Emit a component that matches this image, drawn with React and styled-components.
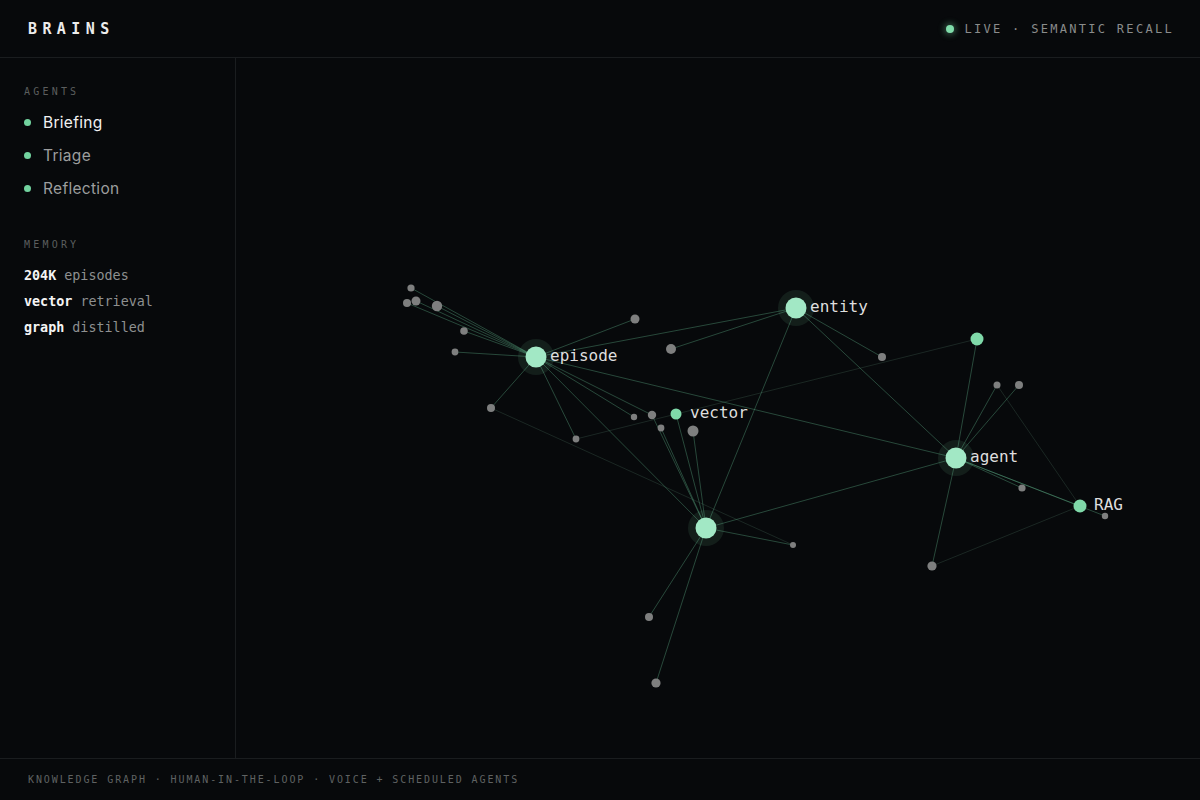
import React from "react";
import styled, { createGlobalStyle } from "styled-components";

const Global = createGlobalStyle`
  html, body { margin: 0; padding: 0; background: #07090b; }
  body { font-family: "Inter", "DejaVu Sans", sans-serif; color: #e6e6e6; }
  * { box-sizing: border-box; }
`;

const MONO = `"DejaVu Sans Mono", "Liberation Mono", monospace`;
const BORDER = "#1a1d1f";

const Page = styled.div`
  width: 1200px;
  height: 800px;
  display: flex;
  flex-direction: column;
  background: #07090b;
  overflow: hidden;
`;

const Header = styled.header`
  height: 58px;
  flex: none;
  border-bottom: 1px solid ${BORDER};
  display: flex;
  align-items: center;
  justify-content: space-between;
  padding: 0 28px;
`;

const Brand = styled.div`
  font-family: ${MONO};
  font-size: 15px;
  font-weight: 600;
  letter-spacing: 5.4px;
  color: #ececec;
`;

const Status = styled.div`
  display: flex;
  align-items: center;
  gap: 10px;
  font-family: ${MONO};
  font-size: 12px;
  letter-spacing: 2.3px;
  color: #8a8c8c;
  margin-right: -2px;
`;

const LiveDot = styled.span`
  width: 8px;
  height: 8px;
  border-radius: 50%;
  background: #7fdcaa;
  box-shadow: 0 0 6px 2px rgba(127, 220, 170, 0.35);
`;

const Body = styled.div`
  flex: 1;
  display: flex;
  min-height: 0;
`;

const Sidebar = styled.aside`
  width: 236px;
  flex: none;
  border-right: 1px solid ${BORDER};
  padding: 28px 24px 0;
`;

const SectionTitle = styled.div`
  font-family: ${MONO};
  font-size: 10px;
  line-height: 12px;
  letter-spacing: 3.2px;
  color: #5b5e5e;
  margin-top: ${(p) => p.$top || 0}px;
  margin-bottom: ${(p) => p.$bottom || 0}px;
`;

const AgentList = styled.ul`
  list-style: none;
  margin: 0;
  padding: 0;
`;

const Agent = styled.li`
  height: 33px;
  display: flex;
  align-items: center;
  gap: 12px;
  font-size: 15.5px;
  letter-spacing: 0.3px;
  color: ${(p) => (p.$active ? "#f2f2f2" : "#9c9e9e")};
`;

const AgentDot = styled.span`
  width: 7px;
  height: 7px;
  border-radius: 50%;
  background: #72d39f;
`;

const MemoryLine = styled.div`
  font-family: ${MONO};
  font-size: 13.4px;
  line-height: 26px;
  color: #8e9090;
`;

const MemoryKey = styled.b`
  color: #f4f4f4;
  font-weight: 700;
  margin-right: 8px;
`;

const Main = styled.main`
  flex: 1;
  min-width: 0;
  position: relative;
`;

const GraphSvg = styled.svg`
  display: block;
  width: 100%;
  height: 100%;
`;

const Label = styled.text`
  font-family: ${MONO};
  font-size: 16px;
  font-weight: 500;
  fill: #dedede;
`;

const Footer = styled.footer`
  height: 42px;
  flex: none;
  border-top: 1px solid ${BORDER};
  display: flex;
  align-items: center;
  padding: 0 28px;
  font-family: ${MONO};
  font-size: 10px;
  letter-spacing: 1.9px;
  color: #5f6262;
`;

const N = {
  episode: [536, 357, "hub"],
  entity: [796, 308, "hub"],
  H: [706, 528, "hub"],
  agent: [956, 458, "hub"],
  vector: [676, 414, "mid", 5.5],
  RAG: [1080, 506, "mid", 6.5],
  G1: [977, 339, "mid", 6.5],
  a1: [411, 288, "gray", 3.6],
  a2: [407, 303, "gray", 4],
  a3: [416, 301, "gray", 4.5],
  a4: [437, 306, "gray", 5.2],
  a5: [464, 331, "gray", 3.8],
  a6: [455, 352, "gray", 3.4],
  a7: [491, 408, "gray", 4],
  b1: [635, 319, "gray", 4.5],
  b2: [671, 349, "gray", 5],
  c1: [576, 439, "gray", 3.4],
  c2: [634, 417, "gray", 3.2],
  c3: [652, 415, "gray", 4.2],
  c4: [661, 428, "gray", 3.4],
  c5: [693, 431, "gray", 5.5],
  d1: [882, 357, "gray", 4],
  e1: [793, 545, "gray", 3],
  f1: [649, 617, "gray", 4],
  f2: [656, 683, "gray", 4.6],
  g1: [997, 385, "gray", 3.5],
  g2: [1019, 385, "gray", 4],
  g3: [1022, 488, "gray", 3.6],
  g4: [1105, 516, "gray", 3.2],
  g5: [932, 566, "gray", 4.6],
};

const STRONG = [
  ["episode", "a1"], ["episode", "a2"], ["episode", "a3"], ["episode", "a4"],
  ["episode", "a5"], ["episode", "a6"], ["episode", "a7"], ["episode", "b1"],
  ["episode", "entity"], ["episode", "agent"], ["episode", "c1"], ["episode", "H"],
  ["episode", "c2"], ["episode", "c3"],
  ["entity", "b2"], ["entity", "d1"], ["entity", "agent"], ["entity", "H"],
  ["H", "c3"], ["H", "c4"], ["H", "vector"], ["H", "c5"], ["H", "agent"],
  ["H", "e1"], ["H", "f1"], ["H", "f2"],
  ["agent", "G1"], ["agent", "g1"], ["agent", "g2"], ["agent", "RAG"],
  ["agent", "g3"], ["agent", "g4"], ["agent", "g5"],
];

const FAINT = [
  ["a7", "e1"], ["c1", "G1"], ["g1", "RAG"], ["g5", "RAG"],
];

const LABELS = [
  ["episode", "episode"],
  ["entity", "entity"],
  ["vector", "vector"],
  ["agent", "agent"],
  ["RAG", "RAG"],
];

function Edge({ from, to, faint }) {
  const [x1, y1] = N[from];
  const [x2, y2] = N[to];
  return (
    <line
      x1={x1}
      y1={y1}
      x2={x2}
      y2={y2}
      stroke={faint ? "#3a5548" : "#5aa882"}
      strokeOpacity={faint ? 0.4 : 0.4}
      strokeWidth={1}
    />
  );
}

function Node({ id }) {
  const [x, y, kind, r] = N[id];
  if (kind === "hub") {
    return (
      <g>
        <circle cx={x} cy={y} r={18} fill="#7fdcaa" fillOpacity={0.1} />
        <circle cx={x} cy={y} r={10.5} fill="#a2e8c5" />
      </g>
    );
  }
  if (kind === "mid") {
    return <circle cx={x} cy={y} r={r} fill="#7fd9a9" />;
  }
  return <circle cx={x} cy={y} r={r} fill="#7e7f7f" />;
}

function Graph() {
  return (
    <GraphSvg viewBox="236 58 964 700" preserveAspectRatio="xMinYMin meet">
      {FAINT.map(([a, b]) => (
        <Edge key={a + b} from={a} to={b} faint />
      ))}
      {STRONG.map(([a, b]) => (
        <Edge key={a + b} from={a} to={b} />
      ))}
      {Object.keys(N).map((id) => (
        <Node key={id} id={id} />
      ))}
      {LABELS.map(([id, text]) => {
        const [x, y] = N[id];
        return (
          <Label key={id} x={x + 14} y={y + 4}>
            {text}
          </Label>
        );
      })}
    </GraphSvg>
  );
}

export default function App() {
  return (
    <>
      <Global />
      <Page>
        <Header>
          <Brand>BRAINS</Brand>
          <Status>
            <LiveDot />
            <span>LIVE · SEMANTIC RECALL</span>
          </Status>
        </Header>
        <Body>
          <Sidebar>
            <SectionTitle $bottom={8}>AGENTS</SectionTitle>
            <AgentList>
              <Agent $active>
                <AgentDot />
                Briefing
              </Agent>
              <Agent>
                <AgentDot />
                Triage
              </Agent>
              <Agent>
                <AgentDot />
                Reflection
              </Agent>
            </AgentList>
            <SectionTitle $top={34} $bottom={12}>MEMORY</SectionTitle>
            <MemoryLine>
              <MemoryKey>204K</MemoryKey>episodes
            </MemoryLine>
            <MemoryLine>
              <MemoryKey>vector</MemoryKey>retrieval
            </MemoryLine>
            <MemoryLine>
              <MemoryKey>graph</MemoryKey>distilled
            </MemoryLine>
          </Sidebar>
          <Main>
            <Graph />
          </Main>
        </Body>
        <Footer>KNOWLEDGE GRAPH · HUMAN-IN-THE-LOOP · VOICE + SCHEDULED AGENTS</Footer>
      </Page>
    </>
  );
}
